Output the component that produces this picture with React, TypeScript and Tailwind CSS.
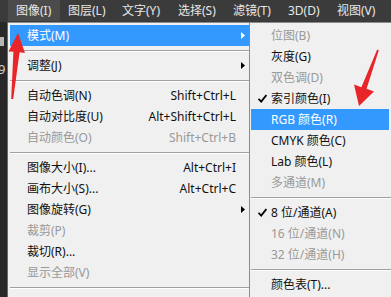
import React from "react";

type Item =
    | { sep: true }
    | { sep?: false; label: string; shortcut?: string; arrow?: boolean; disabled?: boolean; active?: boolean; checked?: boolean };

const bar = [
    { label: "图像(I)", w: "w-[52px]", active: true },
    { label: "图层(L)", w: "w-[54px]" },
    { label: "文字(Y)", w: "w-[56px]" },
    { label: "选择(S)", w: "w-[55px]" },
    { label: "滤镜(T)", w: "w-[55px]" },
    { label: "3D(D)", w: "w-[49px]" },
    { label: "视图(V)", w: "w-[54px]" },
];

const mainItems: Item[] = [
    { label: "模式(M)", arrow: true, active: true },
    { sep: true },
    { label: "调整(J)", arrow: true },
    { sep: true },
    { label: "自动色调(N)", shortcut: "Shift+Ctrl+L" },
    { label: "自动对比度(U)", shortcut: "Alt+Shift+Ctrl+L" },
    { label: "自动颜色(O)", shortcut: "Shift+Ctrl+B", disabled: true },
    { sep: true },
    { label: "图像大小(I)...", shortcut: "Alt+Ctrl+I" },
    { label: "画布大小(S)...", shortcut: "Alt+Ctrl+C" },
    { label: "图像旋转(G)", arrow: true },
    { label: "裁剪(P)", disabled: true },
    { label: "裁切(R)..." },
    { label: "显示全部(V)", disabled: true },
    { sep: true },
];

const subItems: Item[] = [
    { label: "位图(B)", disabled: true },
    { label: "灰度(G)" },
    { label: "双色调(D)", disabled: true },
    { label: "索引颜色(I)", checked: true },
    { label: "RGB 颜色(R)", active: true },
    { label: "CMYK 颜色(C)" },
    { label: "Lab 颜色(L)" },
    { label: "多通道(M)", disabled: true },
    { sep: true },
    { label: "8 位/通道(A)", checked: true },
    { label: "16 位/通道(N)", disabled: true },
    { label: "32 位/通道(H)", disabled: true },
    { sep: true },
    { label: "颜色表(T)..." },
];

function Separator() {
    return (
        <div className="h-[9px] flex items-center">
            <div className="w-full h-[2px] border-t border-[#a0a0a0] bg-white" />
        </div>
    );
}

function Check() {
    return (
        <svg width="9" height="9" viewBox="0 0 9 9">
            <path d="M0.5 4.8 L3.2 7.6 L8.4 1" fill="none" stroke="#000" strokeWidth="1.8" />
        </svg>
    );
}

function textColor(it: { disabled?: boolean; active?: boolean }) {
    if (it.active) return "bg-[#3399ff] text-white";
    if (it.disabled) return "text-[#999999]";
    return "text-[#111111]";
}

export default function App() {
    return (
        <div
            className="relative w-[391px] h-[297px] overflow-hidden bg-[#3b3b3b] flex flex-col text-[12px] leading-none"
            style={{ fontFamily: '"Noto Sans", "Noto Sans CJK SC", sans-serif' }}
        >
            {/* menu bar */}
            <div className="h-[22px] flex pl-[8px] text-[#e8e8e8] shrink-0">
                {bar.map((b) => (
                    <div
                        key={b.label}
                        className={`${b.w} h-[21px] pl-[8px] flex items-center ${b.active ? "bg-[#4b4b4b]" : ""}`}
                    >
                        {b.label}
                    </div>
                ))}
            </div>

            <div className="flex flex-1">
                {/* left tool strip */}
                <div className="w-[8px] bg-[#282828] border-r border-[#6a6a6a] shrink-0 flex flex-col">
                    <div className="mt-[15px] w-[4px] h-[9px] bg-[#b5b5b5]" />
                    <div className="mt-[17px] text-[13px] text-[#cfcfcf] -ml-[2px]">9</div>
                </div>

                {/* main menu */}
                <div className="w-[241px] bg-[#f0f0f0] border-t border-[#8c8c8c] pt-[2px] pl-[2px] shrink-0">
                    {mainItems.map((it, i) =>
                        it.sep ? (
                            <Separator key={i} />
                        ) : (
                            <div key={i} className={`h-[21px] flex items-center pl-[17px] ${textColor(it)}`}>
                                <span className="flex-1">{it.label}</span>
                                {it.shortcut && <span>{it.shortcut}</span>}
                                <span className="w-[13px] flex justify-end pr-[4px]">
                                    {it.arrow && (
                                        <svg width="4" height="7" viewBox="0 0 4 7">
                                            <path d="M0 0 L4 3.5 L0 7 Z" fill={it.active ? "#fff" : "#000"} />
                                        </svg>
                                    )}
                                </span>
                            </div>
                        )
                    )}
                </div>

                {/* submenu */}
                <div className="flex-1 bg-[#f0f0f0] border-t border-l border-[#8c8c8c] pt-[2px] pl-[1px]">
                    {subItems.map((it, i) =>
                        it.sep ? (
                            <Separator key={i} />
                        ) : (
                            <div key={i} className={`h-[21px] flex items-center mr-[2px] ${textColor(it)}`}>
                                <span className="w-[20px] flex justify-center pl-[2px]">{it.checked && <Check />}</span>
                                <span>{it.label}</span>
                            </div>
                        )
                    )}
                </div>
            </div>

            {/* red annotation arrows */}
            <svg className="absolute left-0 top-0" width="391" height="297" viewBox="0 0 391 297">
                <path d="M18 33 L25 53 L19.6 52.3 L13.2 99 L11.2 99 L13.4 51.7 L8.5 51.5 Z" fill="#e8262a" />
                <path d="M359 106 L354 84.5 L361.4 87.2 L377.2 49.5 L378.8 50.2 L366.6 88.8 L374 91.5 Z" fill="#e8262a" />
            </svg>
        </div>
    );
}
